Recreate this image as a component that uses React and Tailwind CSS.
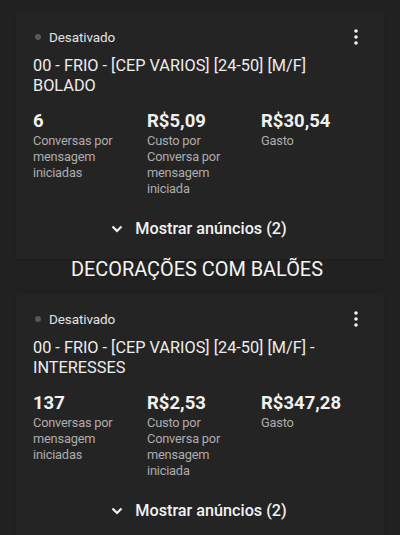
import React from 'react';

const Kebab = () => (
  <svg width="6" height="18" viewBox="0 0 6 18" className="block">
    <circle cx="3" cy="3" r="1.8" fill="#f2f2f2" />
    <circle cx="3" cy="9" r="1.8" fill="#f2f2f2" />
    <circle cx="3" cy="15" r="1.8" fill="#f2f2f2" />
  </svg>
);

const Chevron = () => (
  <svg width="12" height="8" viewBox="0 0 12 8" className="block">
    <path d="M1.5 1.5 L6 6 L10.5 1.5" stroke="#f2f2f2" strokeWidth="2.2" fill="none" />
  </svg>
);

const Metric = ({ value, label }) => (
  <div className="flex flex-col">
    <div className="text-[18.5px] leading-[24px] font-bold text-[#f0f0f0]">{value}</div>
    <div className="text-[12.8px] leading-[16px] tracking-[-0.2px] text-[#adadad] pr-2">{label}</div>
  </div>
);

const CampaignCard = ({ title, metrics, className = '' }) => (
  <div className={`mx-4 rounded-[3px] bg-[#242424] shadow-[0_1px_2px_rgba(0,0,0,0.2)] pl-[17px] pr-[9px] pt-[15px] pb-[20px] ${className}`}>
    <div className="flex items-center justify-between h-5">
      <div className="flex items-center gap-[8px]">
        <span className="w-[6px] h-[6px] rounded-full bg-[#575757] ml-[2px]" />
        <span className="text-[13.5px] tracking-[-0.1px] text-[#e2e2e2]">Desativado</span>
      </div>
      <div className="mr-[16px]">
        <Kebab />
      </div>
    </div>
    <div className="mt-[9px] text-[16.3px] leading-[20px] text-[#ededed]">{title}</div>
    <div className="mt-[13px] grid grid-cols-3">
      {metrics.map((m, i) => (
        <Metric key={i} value={m.value} label={m.label} />
      ))}
    </div>
    <div className="mt-[22px] flex items-center justify-center gap-[12px] pr-[10px]">
      <Chevron />
      <span className="text-[16.2px] leading-[20px] font-medium text-[#f2f2f2]">Mostrar anúncios (2)</span>
    </div>
  </div>
);

export default function App() {
  return (
    <div className="w-[400px] h-[535px] overflow-hidden bg-[#212121] pt-[12px]" style={{ fontFamily: 'Roboto, "Noto Sans", sans-serif' }}>
      <CampaignCard
        title={<>00 - FRIO - [CEP VARIOS] [24-50] [M/F]<br />BOLADO</>}
        metrics={[
          { value: '6', label: 'Conversas por mensagem iniciadas' },
          { value: 'R$5,09', label: 'Custo por Conversa por mensagem iniciada' },
          { value: 'R$30,54', label: 'Gasto' },
        ]}
      />
      <h2 className="text-center text-[19.9px] leading-[22px] text-[#f4f4f4] pr-[6px]">DECORAÇÕES COM BALÕES</h2>
      <CampaignCard
        className="mt-[13px]"
        title={<>00 - FRIO - [CEP VARIOS] [24-50] [M/F] -<br />INTERESSES</>}
        metrics={[
          { value: '137', label: 'Conversas por mensagem iniciadas' },
          { value: 'R$2,53', label: 'Custo por Conversa por mensagem iniciada' },
          { value: 'R$347,28', label: 'Gasto' },
        ]}
      />
    </div>
  );
}
